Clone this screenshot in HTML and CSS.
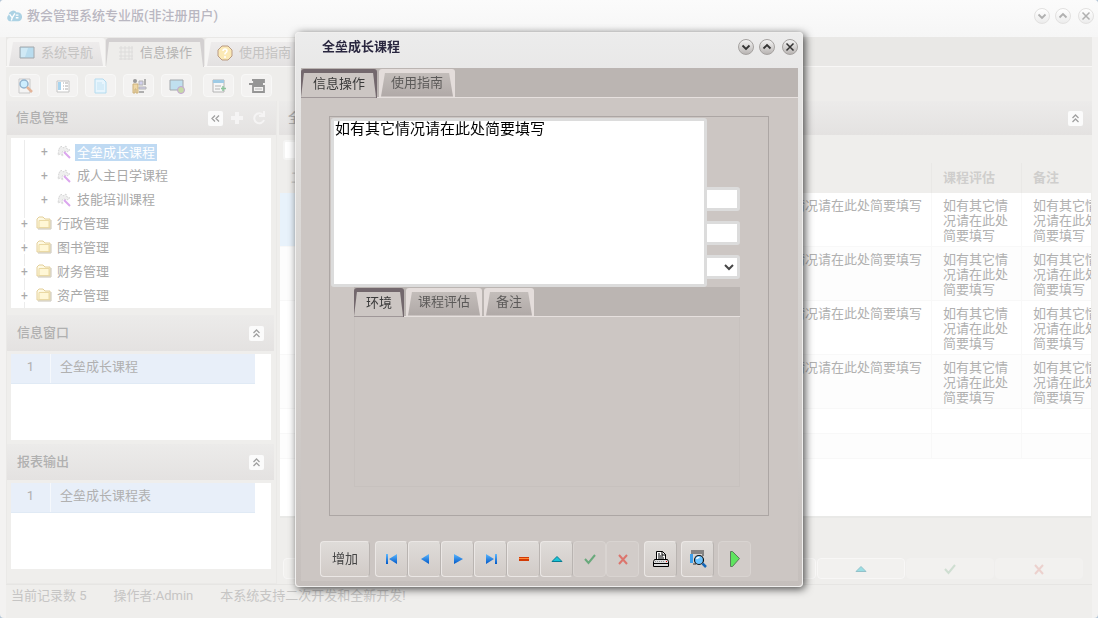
FILE: index.html
```
<!DOCTYPE html>
<html lang="zh-CN">
<head>
    <meta charset="UTF-8">
    <meta name="viewport" content="width=device-width, initial-scale=1.0">
    <title>教会管理系统专业版</title>
    <link rel="stylesheet" href="styles.css">
</head>
<body>
    <!-- Shared icons -->
    <svg class="sprite" aria-hidden="true">
        <defs>
            <linearGradient id="blue" x1="0" y1="0" x2="0" y2="1">
                <stop offset="0" stop-color="#5cb8ff"/>
                <stop offset="1" stop-color="#0058c8"/>
            </linearGradient>
            <linearGradient id="paper" x1="0" y1="0" x2="1" y2="1">
                <stop offset="0" stop-color="#fffdf0"/>
                <stop offset="1" stop-color="#fbedb8"/>
            </linearGradient>
        </defs>
        <symbol id="i-down" viewBox="0 0 16 16"><path d="M4.500 6.500L8 10l3.500-3.500" fill="none" stroke="currentColor" stroke-width="1.800"/></symbol>
        <symbol id="i-up" viewBox="0 0 16 16"><path d="M4.500 9.500L8 6l3.500 3.500" fill="none" stroke="currentColor" stroke-width="1.800"/></symbol>
        <symbol id="i-close" viewBox="0 0 16 16"><path d="M4.500 4.500l7 7M11.500 4.500l-7 7" fill="none" stroke="currentColor" stroke-width="1.500"/></symbol>
        <symbol id="i-fold" viewBox="0 0 16 16"><path d="M4.500 7l3-3 3 3M4.500 11l3-3 3 3" fill="none" stroke="currentColor" stroke-width="1.300"/></symbol>
        <symbol id="i-left2" viewBox="0 0 16 16"><path d="M7 4.500l-3 3 3 3M11 4.500l-3 3 3 3" fill="none" stroke="currentColor" stroke-width="1.300"/></symbol>
        <symbol id="i-first" viewBox="0 0 16 16"><path d="M2 3h2v10H2zM13 3v10L5 8z" fill="url(#blue)"/></symbol>
        <symbol id="i-prev" viewBox="0 0 16 16"><path d="M12 3v10L4 8z" fill="url(#blue)"/></symbol>
        <symbol id="i-next" viewBox="0 0 16 16"><path d="M4 3v10l9-5z" fill="url(#blue)"/></symbol>
        <symbol id="i-last" viewBox="0 0 16 16"><path d="M12 3h2v10h-2zM3 3v10l8-5z" fill="url(#blue)"/></symbol>
        <symbol id="i-minus" viewBox="0 0 16 16"><path d="M3 6h10v4H3z" fill="#d23a05"/><path d="M3 7h10v1H3z" fill="#ff8a3c"/></symbol>
        <symbol id="i-plus" viewBox="0 0 16 16"><path d="M6 2h4v4h4v4h-4v4H6v-4H2V6h4z" fill="currentColor"/></symbol>
        <symbol id="i-edit" viewBox="0 0 16 16"><path d="M3 10.500h10L8 5.500z" fill="#18c3d6" stroke="#087c92" stroke-width="1"/></symbol>
        <symbol id="i-check" viewBox="0 0 16 16"><path d="M3 8l3.500 4L13 4" fill="none" stroke="#69a97c" stroke-width="2"/></symbol>
        <symbol id="i-cancel" viewBox="0 0 16 16"><path d="M4 4l8 9M12 4l-8 9" fill="none" stroke="#dc756d" stroke-width="2"/></symbol>
        <symbol id="i-folder" viewBox="0 0 16 16"><path d="M1 3l2-2h4l2 2h5v9H1z" fill="url(#paper)" stroke="#e3cf9a"/><path d="M3 4.500h10v7H3z" fill="#fff7d6" stroke="#ead9a4"/><path d="M15 4v9H2" fill="none" stroke="#c9c4b6"/></symbol>
        <symbol id="i-wand" viewBox="0 0 16 16"><path d="M3 5l2-3 2 2 3-2 1 3 3 1-3 2-3-1-2 1 1 4-3-2-2 1z" fill="#efefef" stroke="#d6d6d6" stroke-dasharray="2 1"/><path d="M8 8l6 6" stroke="#dba6ee" stroke-width="2"/></symbol>
        <symbol id="i-screen" viewBox="0 0 16 16"><path d="M1 2h14v11H1z" fill="#b9dcee" stroke="#a3a8ac"/><path d="M2 3h7l-3 9H2z" fill="#d0e9f5"/></symbol>
        <symbol id="i-grid" viewBox="0 0 16 16"><path d="M3 1v14M7 1v14M11 1v14M14 1v14M1 3h14M1 7h14M1 11h14M1 14h14" stroke="#dddcdb" fill="none"/></symbol>
    </svg>

    <div class="window">
        <header class="titlebar">
            <svg class="logo" viewBox="0 0 18 16"><path d="M4 14a4 4 0 0 1-1-7 5 5 0 0 1 9-3 5 5 0 0 1 2 10z" fill="#acd2e4"/><path d="M4 6l3 4 3-5M7 10l-1 3M11 7h3M11 10h3" stroke="#fff" stroke-width="1.500" fill="none"/></svg>
            <h1>教会管理系统专业版(非注册用户)</h1>
            <div class="win-buttons">
                <button class="round" aria-label="最小化"><svg><use href="#i-down"/></svg></button>
                <button class="round" aria-label="最大化"><svg><use href="#i-up"/></svg></button>
                <button class="round" aria-label="关闭"><svg><use href="#i-close"/></svg></button>
            </div>
        </header>

        <nav class="tabs">
            <button class="tab"><svg><use href="#i-screen"/></svg><span>系统导航</span></button>
            <button class="tab active"><svg><use href="#i-grid"/></svg><span>信息操作</span></button>
            <button class="tab"><svg viewBox="0 0 16 16"><path d="M5 1h6l4 4v6l-4 4H5l-4-4V5z" fill="#fbe9b6" stroke="#b99a83"/><path d="M6 6q0-2 2-2t2 2q0 1-2 2.500v1M8 11v2" stroke="#fff" stroke-width="1.500" fill="none"/></svg><span>使用指南</span></button>
        </nav>

        <div class="toolbar">
            <button aria-label="查询"><svg viewBox="0 0 16 16"><path d="M2 1h11v14H2z" fill="#f4f4f4" stroke="#c9c9c9"/><circle cx="7" cy="6" r="4" fill="#cdeeff" stroke="#93b4cf" stroke-width="1.500"/><path d="M10 9l5 5" stroke="#e4b59a" stroke-width="2.500"/></svg></button>
            <button aria-label="列表"><svg viewBox="0 0 16 16"><path d="M2 3h12v11H2z" fill="#fff" stroke="#c4c4c4"/><path d="M3 4h3v8H3z" fill="#a9d4ee"/><path d="M8 5h1M8 8h1M8 11h1M10 5h3M10 8h3M10 11h3" stroke="#aaa"/></svg></button>
            <button aria-label="文档"><svg viewBox="0 0 16 16"><path d="M2 1h8l3 3v11H2z" fill="#e7f5fd" stroke="#b3dbef"/><path d="M4 5h5M4 7h7M4 9h7M4 11h7" stroke="#c4e3f3"/></svg></button>
            <button aria-label="人员"><svg viewBox="0 0 16 16"><circle cx="4" cy="3" r="2" fill="#999"/><path d="M2 6h5v9H5v-4H4v4H2z" fill="#eed7a6" stroke="#cdb27c"/><path d="M8 3h4v4H8zM8 9h7v2H8z" fill="#d0cfee" stroke="#b4b4b4"/><path d="M14 1v6M8 14h5" stroke="#999" stroke-width="1.500"/></svg></button>
            <button aria-label="网络"><svg viewBox="0 0 16 16"><path d="M1 2h13v10H1z" fill="#c0e0ef" stroke="#a3a8ac"/><circle cx="12" cy="12" r="3.500" fill="#c6d9a8" stroke="#c3a3d4"/></svg></button>
            <button class="gap" aria-label="新增"><svg viewBox="0 0 16 16"><path d="M2 2h11v12H2z" fill="#f6f6f6" stroke="#b4b4b4"/><path d="M2 2h11v3H2z" fill="#9fcbe5"/><path d="M4 8h6M4 11h5" stroke="#b4b4b4"/><path d="M12 8v5M10 10.500h5" stroke="#8cc49c" stroke-width="1.500"/></svg></button>
            <button aria-label="退出"><svg viewBox="0 0 16 16"><path d="M3 2h12v2H5v2M0 6h14M4 8h11v6H4z" fill="none" stroke="#959595" stroke-width="1.800"/><path d="M6 11h7" stroke="#b6b6b6"/></svg></button>
        </div>

        <main class="main">
            <aside class="side">
                <div class="panel-head">
                    <h2>信息管理</h2>
                    <button class="fold" aria-label="收起"><svg><use href="#i-left2"/></svg></button>
                    <svg class="ghost"><use href="#i-plus"/></svg>
                    <svg class="ghost" viewBox="0 0 16 16"><path d="M12 5a5 5 0 1 0 1 5M13 1v5H8" fill="none" stroke="currentColor" stroke-width="2"/></svg>
                </div>
                <ul class="tree">
                    <li class="child"><i>+</i><svg><use href="#i-wand"/></svg><span class="selected">全垒成长课程</span></li>
                    <li class="child"><i>+</i><svg><use href="#i-wand"/></svg><span>成人主日学课程</span></li>
                    <li class="child"><i>+</i><svg><use href="#i-wand"/></svg><span>技能培训课程</span></li>
                    <li><i>+</i><svg><use href="#i-folder"/></svg><span>行政管理</span></li>
                    <li><i>+</i><svg><use href="#i-folder"/></svg><span>图书管理</span></li>
                    <li><i>+</i><svg><use href="#i-folder"/></svg><span>财务管理</span></li>
                    <li><i>+</i><svg><use href="#i-folder"/></svg><span>资产管理</span></li>
                </ul>
                <div class="panel-head sub">
                    <h2>信息窗口</h2>
                    <button class="fold" aria-label="收起"><svg><use href="#i-fold"/></svg></button>
                </div>
                <div class="list">
                    <table><tr><td>1</td><td>全垒成长课程</td></tr></table>
                </div>
                <div class="panel-head sub">
                    <h2>报表输出</h2>
                    <button class="fold" aria-label="收起"><svg><use href="#i-fold"/></svg></button>
                </div>
                <div class="list">
                    <table><tr><td>1</td><td>全垒成长课程表</td></tr></table>
                </div>
            </aside>

            <section class="content">
                <div class="panel-head">
                    <h2>全垒成长课程</h2>
                    <button class="fold" aria-label="收起"><svg><use href="#i-fold"/></svg></button>
                </div>
                <div class="filter"><input type="text" aria-label="筛选"></div>
                <div class="grid">
                    <table>
                        <colgroup><col><col class="c-env"><col class="c-text"><col class="c-text"></colgroup>
                        <thead>
                            <tr><th>工</th><th></th><th>课程评估</th><th>备注</th></tr>
                        </thead>
                        <tbody>
                            <tr class="current"><td></td><td>如有其它情况请在此处简要填写</td><td>如有其它情况请在此处简要填写</td><td>如有其它情况请在此处简要填写</td></tr>
                            <tr><td></td><td>如有其它情况请在此处简要填写</td><td>如有其它情况请在此处简要填写</td><td>如有其它情况请在此处简要填写</td></tr>
                            <tr><td></td><td>如有其它情况请在此处简要填写</td><td>如有其它情况请在此处简要填写</td><td>如有其它情况请在此处简要填写</td></tr>
                            <tr><td></td><td>如有其它情况请在此处简要填写</td><td>如有其它情况请在此处简要填写</td><td>如有其它情况请在此处简要填写</td></tr>
                            <tr class="empty"><td></td><td></td><td></td><td></td></tr>
                            <tr class="empty"><td></td><td></td><td></td><td></td></tr>
                        </tbody>
                    </table>
                </div>
                <div class="record-bar">
                    <button aria-label="首条"><svg><use href="#i-first"/></svg></button>
                    <button aria-label="上一条"><svg><use href="#i-prev"/></svg></button>
                    <button aria-label="下一条"><svg><use href="#i-next"/></svg></button>
                    <button aria-label="末条"><svg><use href="#i-last"/></svg></button>
                    <button aria-label="增加"><svg><use href="#i-plus"/></svg></button>
                    <button aria-label="删除"><svg><use href="#i-minus"/></svg></button>
                    <button aria-label="编辑"><svg><use href="#i-edit"/></svg></button>
                    <button class="off" aria-label="保存"><svg><use href="#i-check"/></svg></button>
                    <button class="off" aria-label="取消"><svg><use href="#i-cancel"/></svg></button>
                </div>
            </section>
        </main>

        <footer class="status">
            <span>当前记录数 5</span>
            <span>操作者:Admin</span>
            <span>本系统支持二次开发和全新开发!</span>
        </footer>
    </div>

    <div class="overlay">
        <div class="dialog" role="dialog" aria-labelledby="dialog-title">
            <header class="dialog-title">
                <h2 id="dialog-title">全垒成长课程</h2>
                <div class="win-buttons">
                    <button class="round" aria-label="最小化"><svg><use href="#i-down"/></svg></button>
                    <button class="round" aria-label="最大化"><svg><use href="#i-up"/></svg></button>
                    <button class="round" aria-label="关闭"><svg><use href="#i-close"/></svg></button>
                </div>
            </header>
            <div class="dialog-body">
                <nav class="tabs">
                    <button class="tab active"><span>信息操作</span></button>
                    <button class="tab"><span>使用指南</span></button>
                </nav>
                <div class="group">
                    <div class="fields">
                        <input type="text" aria-label="课程名称">
                        <input type="text" aria-label="课程日期">
                        <select aria-label="课程类别"><option></option></select>
                    </div>
                    <div class="notes">
                        <nav class="tabs">
                            <button class="tab active"><span>环境</span></button>
                            <button class="tab"><span>课程评估</span></button>
                            <button class="tab"><span>备注</span></button>
                        </nav>
                        <div class="notes-page"></div>
                    </div>
                    <textarea class="memo" aria-label="环境" spellcheck="false">如有其它情况请在此处简要填写</textarea>
                </div>
                <div class="actions">
                    <button class="wide">增加</button>
                    <div class="navigator">
                        <button aria-label="首条"><svg><use href="#i-first"/></svg></button>
                        <button aria-label="上一条"><svg><use href="#i-prev"/></svg></button>
                        <button aria-label="下一条"><svg><use href="#i-next"/></svg></button>
                        <button aria-label="末条"><svg><use href="#i-last"/></svg></button>
                        <button aria-label="删除"><svg><use href="#i-minus"/></svg></button>
                        <button aria-label="编辑"><svg><use href="#i-edit"/></svg></button>
                        <button class="off" aria-label="保存"><svg><use href="#i-check"/></svg></button>
                        <button class="off" aria-label="取消"><svg><use href="#i-cancel"/></svg></button>
                    </div>
                    <div class="extra">
                        <button aria-label="打印"><svg viewBox="0 0 18 18"><path d="M4.500 9V1.500h6l3 3V9" fill="#fff" stroke="#000"/><path d="M10 1v4h4M6 4h2M6 6h5M6 8h6" fill="none" stroke="#000"/><path d="M2.500 9.500h13l1 2v5h-15v-5z" fill="#ddd" stroke="#000"/><path d="M1 13.500h16" stroke="#000"/><path d="M3 11.500h10" stroke="#999" stroke-dasharray="1 1"/><path d="M14 11h1v1h-1z" fill="#e00"/></svg></button>
                        <button aria-label="预览"><svg viewBox="0 0 18 18"><path d="M2 1h13M2 3h13" stroke="#333" stroke-width="1.200"/><path d="M1 4h3v9H1z" fill="#3fa0ea"/><path d="M5 4h10v10H5z" fill="#d4d2d0"/><path d="M4 14h3M14 4v2" stroke="#333"/><circle cx="10" cy="10" r="4.500" fill="#6cc4ff" stroke="#111" stroke-width="1.200"/><path d="M7.500 9q1-2 3-1.500" stroke="#fff" stroke-width="1.500" fill="none"/><path d="M13.500 13.500L17 17" stroke="#1668b8" stroke-width="2.500"/></svg></button>
                        <button class="off" aria-label="运行"><svg viewBox="0 0 18 18"><path d="M4.500 1.500h2l7 7-7 8h-2z" fill="#5fe45f" stroke="#5d7a5d"/></svg></button>
                    </div>
                </div>
            </div>
        </div>
    </div>
</body>
</html>
```
FILE: styles.css
```
* {
    box-sizing: border-box;
}
body {
    margin: 0;
    font-family: Roboto, "Noto Sans CJK SC", sans-serif;
    font-size: 13px;
    line-height: 20px;
    color: #b0b0b0;
    background: #b4c6d8;
}
h1, h2 {
    margin: 0;
    font-size: 13px;
    line-height: 20px;
}
button, input, select, textarea {
    font: inherit;
    color: inherit;
    margin: 0;
    padding: 0;
}
button {
    border: none;
    background: none;
}
svg {
    width: 16px;
    height: 16px;
    flex: none;
    display: block;
}
.sprite {
    position: absolute;
    width: 0;
    height: 0;
}

/* main window */
.window {
    display: flex;
    flex-direction: column;
    min-height: 100vh;
    padding: 0 6px;
    border-radius: 4px;
    background: #f3f2f1;
    overflow: hidden;
}
.titlebar {
    display: flex;
    align-items: center;
    height: 37px;
    margin: 0 -6px;
    padding: 0 4px 5px 6px;
    background: linear-gradient(#fbfbfb, #f6f6f6);
}
.titlebar h1 {
    flex: 1;
    margin-left: 5px;
    font-weight: 500;
    color: #b9b7c1;
}
.logo {
    width: 16px;
}
.win-buttons {
    display: flex;
    gap: 5px;
}
.round {
    display: flex;
    align-items: center;
    justify-content: center;
    width: 16px;
    height: 16px;
    border: 1px solid #e2e1e0;
    border-radius: 50%;
    background: linear-gradient(#fff, #ececec);
}
.round:last-child {
    margin-left: 2px;
}

/* tabs, shared by window and dialog */
.tabs {
    display: flex;
    gap: 1px;
    height: 30px;
    padding: 1px 1px 0;
    background: #e9e8e6;
    border-bottom: 1px solid #f8f7f6;
}
.tab {
    position: relative;
    z-index: 0;
    display: flex;
    align-items: center;
    gap: 6px;
    padding: 1px 12px 0;
    border-radius: 3px 3px 0 0;
    background: #f6f5f4;
    white-space: nowrap;
}
.tab::before {
    content: "";
    position: absolute;
    z-index: -1;
    inset: 4px 2px 0;
    background: linear-gradient(#eeecec, #e3e1e1);
    clip-path: polygon(4px 0, calc(100% - 4px) 0, 100% 100%, 0 100%);
}
.tab.active {
    margin-bottom: -1px;
    background: #d3d0d1;
}
.tab.active::before {
    inset: 4px 1px 0 0;
    background: #eeedeb;
    clip-path: polygon(3px 0, calc(100% - 3px) 0, 100% 100%, 0 100%);
}
.window > .tabs .tab {
    min-width: 98px;
    color: #c4c3c2;
}
.window > .tabs .active {
    color: #b5b4b3;
}

.toolbar {
    display: flex;
    gap: 7px;
    height: 34px;
    padding: 7px 4px 4px 3px;
    background: #eeedeb;
}
.toolbar button {
    display: flex;
    align-items: center;
    justify-content: center;
    width: 31px;
    height: 23px;
    border: 1px solid #f8f8f7;
    border-radius: 4px;
    background: #f3f2f1;
}
.toolbar .gap {
    margin-left: 4px;
}

.main {
    display: flex;
    flex: 1;
    gap: 2px;
    background: #efeeec;
}
.side {
    flex: none;
    width: 271px;
    border: 1px solid #eae9e7;
    border-top: none;
}
.panel-head {
    display: flex;
    align-items: center;
    height: 34px;
    padding: 0 9px;
    background: linear-gradient(#ecebea, #e4e2e1);
}
.panel-head h2 {
    flex: 1;
    font-weight: 500;
}
.panel-head.sub {
    height: 36px;
    margin-right: 2px;
    padding: 0 10px;
}
.fold {
    display: flex;
    width: 15px;
    height: 15px;
    border-radius: 2px;
    background: #fbfbfb;
    color: #a0a0a0;
}
.ghost {
    margin-left: 6px;
    color: #f5f4f4;
}
.tree {
    height: 170px;
    margin: 3px 5px 7px 4px;
    padding: 2px 0 0 10px;
    overflow: hidden;
    list-style: none;
    background: #fff;
    color: #a9a9a9;
}
.tree li {
    display: flex;
    align-items: center;
    height: 24px;
    background: linear-gradient(#ececec, #ececec) 3px 0 / 1px 100% no-repeat;
}
.tree i {
    width: 7px;
    margin-right: 8px;
    font-style: normal;
    font-size: 12px;
    text-align: center;
    background: #fff;
    line-height: 12px;
}
.tree li svg {
    margin-right: 3px;
}
.tree span {
    padding: 0 2px;
}
.tree .child {
    padding-left: 20px;
}
.tree .selected {
    line-height: 17px;
    background: #bfdaf3;
    color: #fff;
}
.list {
    height: 86px;
    margin: 3px 5px 4px 4px;
    padding-right: 16px;
    background: #fff;
}
.list table {
    width: 100%;
    border-spacing: 0;
    border-bottom: 1px solid #e0eaf5;
}
.list td {
    height: 29px;
    padding: 0 0 3px 9px;
    background: #e8eff9;
}
.list td:first-child {
    width: 40px;
    padding-left: 0;
    text-align: center;
    border-right: 1px solid #f5f8fc;
}

.content {
    display: flex;
    flex-direction: column;
    flex: 1;
    min-width: 0;
}
.filter {
    height: 28px;
    padding: 5px 4px;
}
.filter input {
    width: 120px;
    height: 20px;
    border: 2px solid #f5f5f4;
    border-radius: 3px;
    background: #fff;
}
.grid {
    flex: 1;
    margin: 0 1px;
    overflow: hidden;
    border-bottom: 2px solid #e9e9e7;
    background: #fff;
}
.grid table {
    width: calc(100% + 21px);
    min-width: 832px;
    table-layout: fixed;
    border-spacing: 0;
}
.c-env {
    width: 203px;
}
.c-text {
    width: 90px;
}
.grid th {
    height: 30px;
    padding: 0 8px 0 11px;
    border-right: 1px solid #e9e8e6;
    background: #efeeec;
    color: #cfcecd;
    font-weight: 700;
    text-align: left;
}
.grid td {
    height: 54px;
    padding: 5px 8px 3px 11px;
    border-right: 1px solid #f8f8f8;
    border-bottom: 1px solid #f8f8f8;
    line-height: 15px;
    vertical-align: top;
}
.grid tr:nth-child(even) td {
    background: #fdfdfd;
}
.grid .current td:first-child {
    background: #e8f2fb;
}
.grid .empty td {
    height: 25px;
    padding: 0;
    background: #fff;
}
.record-bar {
    display: flex;
    gap: 1px;
    padding: 40px 9px 5px 4px;
}
.record-bar button {
    display: flex;
    align-items: center;
    justify-content: center;
    flex: 1;
    height: 21px;
    border: 1px solid #f8f7f6;
    border-radius: 4px;
    background: #f2f1ef;
}
.record-bar svg {
    opacity: 0.4;
}
.record-bar .off {
    border-color: #f2f1f0;
}
.record-bar .off svg {
    opacity: 0.25;
}
.status {
    display: flex;
    gap: 27px;
    height: 34px;
    padding: 1px 5px 0;
    border-top: 1px solid #e6e5e3;
    background: #efeeec;
    color: #c6c5c4;
}

/* dialog */
.overlay {
    position: fixed;
    inset: 0;
    display: flex;
    align-items: center;
    justify-content: center;
}
.dialog {
    width: 508px;
    padding: 0 4px 5px 5px;
    border: 1px solid #f0efee;
    border-radius: 4px;
    background: linear-gradient(#ececec, #dcdad8 30%, #c5bfbc);
    box-shadow: 2px 2px 8px rgba(0, 0, 0, 0.7);
    color: #454545;
}
.dialog-title {
    display: flex;
    align-items: center;
    height: 35px;
    padding: 0 0 6px 21px;
}
.dialog-title h2 {
    flex: 1;
    font-weight: 700;
    color: #29263f;
}
.dialog .round {
    border-color: #a5a2a0;
    background: linear-gradient(#f3f3f3, #b9b5b3);
    color: #333;
}
.dialog-body {
    background: #ccc6c3;
}
.dialog .tabs {
    padding: 1px 0 0;
    gap: 2px;
    background: #bbb5b2;
    border-bottom-color: #e6e0de;
}
.dialog .tab {
    background: #e4dddb;
    color: #5c5a59;
}
.dialog .tab::before {
    background: linear-gradient(#c3bdba, #b0a9a7);
}
.dialog .tab.active {
    background: #73686d;
    color: #3a3a3a;
}
.dialog .tab.active::before {
    background: #ccc6c3;
}
.group {
    position: relative;
    margin: 18px 29px 0 28px;
    padding: 70px 28px 28px 24px;
    border: 1px solid #aca6a4;
}
.fields {
    display: flex;
    flex-direction: column;
    gap: 10px;
}
.fields input,
.fields select {
    width: 100%;
    height: 24px;
    border: 3px solid #dcdcdc;
    border-radius: 3px;
    background: #fff;
}
.notes {
    margin-top: 8px;
}
.notes-page {
    height: 170px;
    border: 1px solid #c7c1be;
    border-top: none;
}
/* memo editor opened over the fields */
.memo {
    position: absolute;
    top: 1px;
    left: 1px;
    width: 376px;
    height: 169px;
    padding: 0 1px;
    border: 3px solid #dcdcdc;
    border-radius: 3px;
    outline: none;
    resize: none;
    background: #fff;
    color: #000;
    font-size: 15px;
    line-height: 16px;
}
.actions {
    display: flex;
    gap: 5px;
    padding: 25px 18px 4px 19px;
}
.actions button {
    display: flex;
    align-items: center;
    justify-content: center;
    width: 33px;
    height: 36px;
    border: 1px solid #ebe7e5;
    border-right-color: #b9b4b1;
    border-radius: 4px;
    background: linear-gradient(#dfdcd9, #d1cbc7);
}
.actions .wide {
    width: 50px;
}
.actions .off {
    border-color: #d9d4d1;
    background: #d2ccc9;
}
.navigator {
    display: flex;
}
.extra {
    display: flex;
    gap: 4px;
}
.extra svg {
    width: 18px;
    height: 18px;
}
```
